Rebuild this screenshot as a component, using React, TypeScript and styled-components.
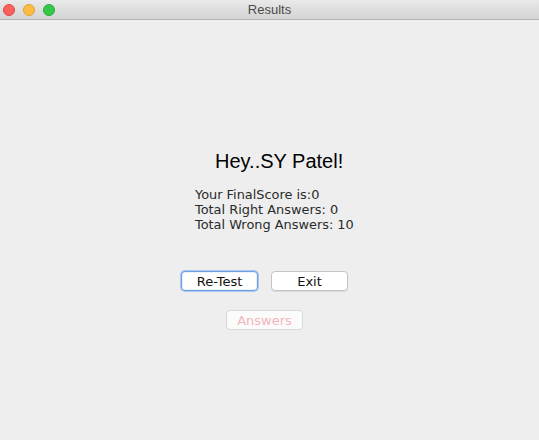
import React from "react";
import styled, { createGlobalStyle } from "styled-components";

const Global = createGlobalStyle`
  html, body { margin: 0; padding: 0; background: #eeeeee; }
  body { width: 539px; height: 440px; overflow: hidden; }
`;

const Window = styled.div`
  width: 539px;
  height: 440px;
  display: flex;
  flex-direction: column;
  background: #eeeeee;
`;

const TitleBar = styled.div`
  height: 19px;
  flex: none;
  display: flex;
  align-items: center;
  position: relative;
  background: linear-gradient(#e9e9e9, #d4d4d4);
  border-bottom: 1px solid #b5b5b5;
`;

const Lights = styled.div`
  display: flex;
  gap: 8px;
  padding-left: 3px;
`;

const Light = styled.span<{ $c: string; $b: string }>`
  width: 12px;
  height: 12px;
  border-radius: 50%;
  box-sizing: border-box;
  background: ${(p) => p.$c};
  border: 0.5px solid ${(p) => p.$b};
`;

const Title = styled.div`
  position: absolute;
  left: 0;
  right: 0;
  top: 0;
  bottom: 0;
  display: flex;
  align-items: center;
  justify-content: center;
  font-family: "Liberation Sans", Arial, sans-serif;
  font-size: 13px;
  color: #4b4b4b;
  pointer-events: none;
`;

const Content = styled.div`
  display: flex;
  flex-direction: column;
  align-items: flex-start;
  padding-top: 129px;
`;

const Heading = styled.div`
  margin-left: 215px;
  font-family: "Liberation Sans", Arial, sans-serif;
  font-size: 20px;
  line-height: 24px;
  color: #000;
`;

const Info = styled.div`
  margin-top: 14px;
  margin-left: 195px;
  display: flex;
  flex-direction: column;
  font-family: "DejaVu Sans", sans-serif;
  font-size: 12.9px;
  line-height: 15px;
  color: #2a2a2a;
`;

const ButtonRow = styled.div<{ $left: number; $top: number }>`
  display: flex;
  gap: 13px;
  margin-left: ${(p) => p.$left}px;
  margin-top: ${(p) => p.$top}px;
`;

const Button = styled.button<{ $focused?: boolean }>`
  width: 77px;
  height: 20px;
  box-sizing: border-box;
  padding: 0;
  border-radius: 4px;
  background: #ffffff;
  font-family: "DejaVu Sans", sans-serif;
  font-size: 13px;
  color: #111;
  border: 1px solid ${(p) => (p.$focused ? "#6e9fe3" : "#c4c4c4")};
  box-shadow: ${(p) =>
    p.$focused
      ? "0 0 0 1px #a9c7f0, inset 0 0 0 0.5px #d6e5fa"
      : "0 1px 0 rgba(0,0,0,0.08)"};
  &:disabled {
    color: #f2b6ba;
    border-color: #d8d8d8;
    background: #fbfbfb;
    box-shadow: none;
  }
`;

export default function App() {
  return (
    <Window>
      <Global />
      <TitleBar>
        <Lights>
          <Light $c="#fc605c" $b="#de4841" />
          <Light $c="#fdbc40" $b="#dea235" />
          <Light $c="#34c84a" $b="#27aa35" />
        </Lights>
        <Title>Results</Title>
      </TitleBar>
      <Content>
        <Heading>Hey..SY Patel!</Heading>
        <Info>
          <span>Your FinalScore is:0</span>
          <span>Total Right Answers: 0</span>
          <span>Total Wrong Answers: 10</span>
        </Info>
        <ButtonRow $left={181} $top={39}>
          <Button $focused>Re-Test</Button>
          <Button>Exit</Button>
        </ButtonRow>
        <ButtonRow $left={226} $top={19}>
          <Button disabled>Answers</Button>
        </ButtonRow>
      </Content>
    </Window>
  );
}
